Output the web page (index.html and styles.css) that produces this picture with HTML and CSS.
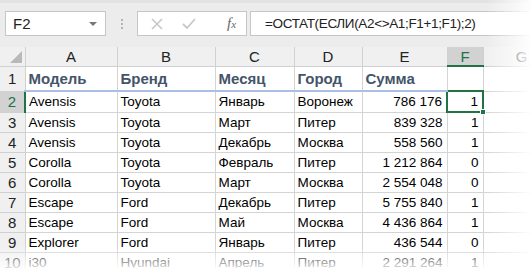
FILE: index.html
```html
<!DOCTYPE html>
<html lang="ru">
<head>
  <meta charset="UTF-8" />
  <title>Excel - ОСТАТ</title>
  <link rel="stylesheet" href="styles.css">
</head>
<body>
  <div class="sheet">
    <div class="toolbar">
      <div class="name-box">
        <span>F2</span>
        <span class="drop"></span>
      </div>
      <div class="grip">
        <i></i><i></i><i></i>
      </div>
      <div class="fx-box">
        <svg class="ico" width="14" height="14" viewBox="0 0 14 14">
          <path d="M2 2 L12 12 M12 2 L2 12" stroke="#c8c8c8" stroke-width="1.6" fill="none" />
        </svg>
        <svg class="ico" width="16" height="14" viewBox="0 0 16 14">
          <path d="M2 7 L6 11 L14 2" stroke="#c8c8c8" stroke-width="1.8" fill="none" />
        </svg>
        <span class="fx">f<small>x</small></span>
      </div>
      <div class="formula">=ОСТАТ(ЕСЛИ(A2&lt;&gt;A1;F1+1;F1);2)</div>
    </div>

    <table class="grid">
      <colgroup>
        <col class="c-rh">
        <col class="c-a">
        <col class="c-b">
        <col class="c-c">
        <col class="c-d">
        <col class="c-e">
        <col class="c-f">
        <col class="c-g">
      </colgroup>
      <thead>
        <tr>
          <th class="corner"><span class="tri"></span></th>
          <th>A</th>
          <th>B</th>
          <th>C</th>
          <th>D</th>
          <th>E</th>
          <th class="sel">F</th>
          <th>G</th>
        </tr>
      </thead>
      <tbody>
        <tr class="head-row">
          <th>1</th>
          <td class="hd">Модель</td>
          <td class="hd">Бренд</td>
          <td class="hd">Месяц</td>
          <td class="hd">Город</td>
          <td class="hd">Сумма</td>
          <td></td>
          <td></td>
        </tr>
        <tr>
          <th class="sel">2</th>
          <td>Avensis</td><td>Toyota</td><td>Январь</td><td>Воронеж</td>
          <td class="num">786 176</td>
          <td class="num active">1<span class="handle"></span></td>
          <td></td>
        </tr>
        <tr>
          <th>3</th>
          <td>Avensis</td><td>Toyota</td><td>Март</td><td>Питер</td>
          <td class="num">839 328</td><td class="num">1</td><td></td>
        </tr>
        <tr>
          <th>4</th>
          <td>Avensis</td><td>Toyota</td><td>Декабрь</td><td>Москва</td>
          <td class="num">558 560</td><td class="num">1</td><td></td>
        </tr>
        <tr>
          <th>5</th>
          <td>Corolla</td><td>Toyota</td><td>Февраль</td><td>Питер</td>
          <td class="num">1 212 864</td><td class="num">0</td><td></td>
        </tr>
        <tr>
          <th>6</th>
          <td>Corolla</td><td>Toyota</td><td>Март</td><td>Москва</td>
          <td class="num">2 554 048</td><td class="num">0</td><td></td>
        </tr>
        <tr>
          <th>7</th>
          <td>Escape</td><td>Ford</td><td>Декабрь</td><td>Питер</td>
          <td class="num">5 755 840</td><td class="num">1</td><td></td>
        </tr>
        <tr>
          <th>8</th>
          <td>Escape</td><td>Ford</td><td>Май</td><td>Москва</td>
          <td class="num">4 436 864</td><td class="num">1</td><td></td>
        </tr>
        <tr>
          <th>9</th>
          <td>Explorer</td><td>Ford</td><td>Январь</td><td>Питер</td>
          <td class="num">436 544</td><td class="num">0</td><td></td>
        </tr>
        <tr>
          <th>10</th>
          <td>i30</td><td>Hyundai</td><td>Апрель</td><td>Питер</td>
          <td class="num">2 291 264</td><td class="num">1</td><td></td>
        </tr>
      </tbody>
    </table>

    <div class="fade-right"></div>
    <div class="fade-bottom"></div>
  </div>
</body>
</html>
```

FILE: styles.css
```css
* {
  margin: 0;
  padding: 0;
  box-sizing: border-box;
}

body {
  font-family: 'Liberation Sans', Arial, sans-serif;
  background: #fff;
  color: #000;
  width: 531px;
  height: 268px;
  overflow: hidden;
}

.sheet {
  position: relative;
  width: 531px;
  height: 268px;
  overflow: hidden;
}

/* formula bar */
.toolbar {
  height: 47px;
  background: #ececec;
  border-top: 3px solid #e2e2e2;
  display: flex;
  align-items: flex-start;
  padding: 8px 0 0 5px;
}

.name-box {
  width: 101px;
  height: 25px;
  background: #fff;
  border: 1px solid #c6c6c6;
  display: flex;
  align-items: center;
  justify-content: space-between;
  padding: 0 8px 0 7px;
  font-size: 15px;
  color: #222;
}

.drop {
  width: 0;
  height: 0;
  border-left: 4px solid transparent;
  border-right: 4px solid transparent;
  border-top: 4px solid #777;
}

.grip {
  width: 31px;
  height: 25px;
  display: flex;
  flex-direction: column;
  align-items: center;
  justify-content: center;
  gap: 2px;
}

.grip i {
  display: block;
  width: 2px;
  height: 2px;
  background: #b4b4b4;
}

.fx-box {
  width: 110px;
  height: 25px;
  background: #fff;
  border: 1px solid #c6c6c6;
  display: flex;
  align-items: center;
  padding-left: 12px;
}

.fx-box .ico {
  margin-right: 17px;
}

.fx-box .ico + .ico {
  margin-right: 30px;
}

.fx {
  font-family: 'Liberation Serif', serif;
  font-style: italic;
  font-size: 15px;
  color: #666;
}

.fx small {
  font-size: 11px;
}

.formula {
  flex: 1;
  margin-left: 3px;
  height: 25px;
  background: #fff;
  border: 1px solid #c6c6c6;
  border-right: none;
  font-size: 13.5px;
  letter-spacing: -0.35px;
  line-height: 23px;
  padding-left: 14px;
  color: #222;
}

/* sheet grid */
.grid {
  border-collapse: collapse;
  table-layout: fixed;
  width: 560px;
  font-size: 13.5px;
}

.c-rh { width: 25px; }
.c-a { width: 92px; }
.c-b { width: 98px; }
.c-c { width: 79px; }
.c-d { width: 68px; }
.c-e { width: 85px; }
.c-f { width: 36px; }
.c-g { width: 77px; }

.grid th {
  background: #f0f0f0;
  border: 1px solid #d0d0d0;
  font-weight: normal;
  color: #222;
  font-size: 15px;
}

.grid thead th {
  height: 19px;
  line-height: 17px;
  border-top: none;
}

.grid thead th.sel {
  background: #d2d2d2;
  color: #217346;
  border-bottom: 2px solid #217346;
}

.grid .corner {
  position: relative;
  border-left: none;
}

.tri {
  position: absolute;
  right: 3px;
  bottom: 3px;
  width: 0;
  height: 0;
  border-left: 12px solid transparent;
  border-bottom: 12px solid #b9b9b9;
}

.grid tbody th {
  text-align: center;
  border-left: none;
}

.grid tbody th.sel {
  background: #d2d2d2;
  color: #217346;
  border-right: 2px solid #217346;
}

.grid td {
  border: 1px solid #d4d4d4;
  height: 20px;
  padding: 1px 3px 0;
  white-space: nowrap;
  overflow: hidden;
  line-height: 18px;
}

.head-row th,
.head-row td {
  height: 25px;
}

.head-row .hd {
  font-weight: bold;
  font-size: 15px;
  color: #44546a;
  border-bottom: 2px solid #a9bfe3;
}

.grid td.num {
  text-align: right;
  padding-right: 4px;
}

.grid td.active {
  position: relative;
  overflow: visible;
  border: 2px solid #217346;
}

.handle {
  position: absolute;
  right: -4px;
  bottom: -4px;
  width: 6px;
  height: 6px;
  background: #217346;
  border: 1px solid #fff;
}

/* torn-off edges */
.fade-right {
  position: absolute;
  top: 0;
  right: 0;
  width: 45px;
  height: 100%;
  background: linear-gradient(to right, rgba(255, 255, 255, 0), rgba(255, 255, 255, 0.95));
}

.fade-bottom {
  position: absolute;
  left: 0;
  bottom: 0;
  width: 100%;
  height: 22px;
  background: linear-gradient(to bottom, rgba(255, 255, 255, 0), rgba(255, 255, 255, 0.85));
}
```
